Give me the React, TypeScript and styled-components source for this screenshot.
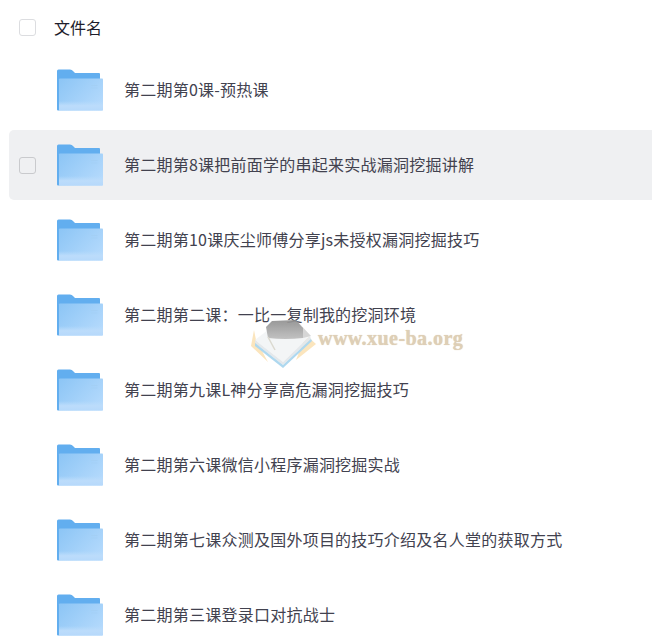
import React from 'react';
import styled, { createGlobalStyle } from 'styled-components';

const files = [
  '第二期第0课-预热课',
  '第二期第8课把前面学的串起来实战漏洞挖掘讲解',
  '第二期第10课庆尘师傅分享js未授权漏洞挖掘技巧',
  '第二期第二课：一比一复制我的挖洞环境',
  '第二期第九课L神分享高危漏洞挖掘技巧',
  '第二期第六课微信小程序漏洞挖掘实战',
  '第二期第七课众测及国外项目的技巧介绍及名人堂的获取方式',
  '第二期第三课登录口对抗战士',
];

const FolderIcon = () => (
  <FolderSvg viewBox="0 0 46 42">
    <defs>
      <linearGradient id="folderFront" x1="0" y1="0" x2="1" y2="0.7">
        <stop offset="0" stopColor="#8cc5f5" />
        <stop offset="1" stopColor="#b3d9fc" />
      </linearGradient>
      <linearGradient id="folderBottom" x1="0" y1="0" x2="0" y2="1">
        <stop offset="0" stopColor="#b9dcfb" stopOpacity="0" />
        <stop offset="0.5" stopColor="#bcdcfb" />
        <stop offset="1" stopColor="#b6d9fb" />
      </linearGradient>
    </defs>
    <path d="M0 2Q0 .5 1.500 .5H13Q15 .5 16 2L18 4H42Q43 4 43 5V12H2.500V41.500H1Q0 41.500 0 40.500Z" fill="#62aeef" />
    <rect x="2" y="9.500" width="44" height="32" rx=".8" fill="url(#folderFront)" />
    <rect x="2" y="32" width="44" height="9.500" rx=".8" fill="url(#folderBottom)" />
    <rect x="34" y="16" width="6.500" height="1" fill="#a3cff5" />
    <rect x="34" y="18.500" width="6.500" height="1" fill="#a3cff5" />
  </FolderSvg>
);

const WatermarkLogo = () => (
  <svg width="68" height="52" viewBox="0 0 68 52">
    <defs>
      <linearGradient id="capBody" x1="0" y1="0" x2="0" y2="1">
        <stop offset="0" stopColor="#8f8f8f" />
        <stop offset="1" stopColor="#bdbdbd" />
      </linearGradient>
    </defs>
    <path d="M4 12 L1 28 L18 44 L6 22 Z" fill="#fbe3b8" />
    <path d="M56 17 L66 26 L46 42 Z" fill="#fbe3b8" />
    <path d="M5 22 L18 12 L60 18 L33 44 Z" fill="#f3f5f6" />
    <path d="M5 22 L33 44 L60 18 L61 21 L33 47 L5 25 Z" fill="#e2e7ea" />
    <path d="M5 25 L33 47 L61 21 L62 23 L33 50 L5 28 Z" fill="#a8d5ee" />
    <path d="M46 2 L61 18 L53 20 L52 8 Z" fill="#d3d3d3" />
    <path d="M16 9 L22 3 L46 2 L53 10 L53 20 Q35 22 18 20 Z" fill="url(#capBody)" />
    <path d="M18 19 L25 32" stroke="#d8d6cc" strokeWidth="1.500" fill="none" />
  </svg>
);

const App: React.FC = () => (
  <Page>
    <GlobalStyle />
    <Header>
      <Checkbox />
      <HeaderLabel>文件名</HeaderLabel>
    </Header>
    <List>
      {files.map((name, index) => (
        <Row key={name} $active={index === 1}>
          <RowCheck>{index === 1 && <Checkbox $active />}</RowCheck>
          <FolderIcon />
          <FileName>{name}</FileName>
        </Row>
      ))}
    </List>
    <Watermark>
      <WatermarkLogo />
      <WatermarkText>www.xue-ba.org</WatermarkText>
    </Watermark>
  </Page>
);

export default App;

const GlobalStyle = createGlobalStyle`
  html, body {
    margin: 0;
    background: #fff;
    overflow: hidden;
  }
`;

const Page = styled.div`
  position: relative;
  width: 652px;
  height: 640px;
  overflow: hidden;
  font-family: "Noto Sans CJK SC", "Liberation Sans", sans-serif;
`;

const Header = styled.div`
  display: flex;
  align-items: center;
  height: 55px;
  padding-left: 19px;
  box-sizing: border-box;
`;

const Checkbox = styled.span<{ $active?: boolean }>`
  display: block;
  flex: none;
  width: 17px;
  height: 17px;
  box-sizing: border-box;
  border: 1px solid ${p => (p.$active ? '#c9cacd' : '#dcdde0')};
  border-radius: 3px;
  background: ${p => (p.$active ? 'transparent' : '#fff')};
`;

const HeaderLabel = styled.span`
  margin: 0 0 2px 18px;
  font-size: 16px;
  color: #1d1d2b;
`;

const List = styled.div`
  display: flex;
  flex-direction: column;
  gap: 5px;
  margin-left: 9px;
`;

const Row = styled.div<{ $active: boolean }>`
  display: flex;
  flex: none;
  align-items: center;
  height: 70px;
  border-radius: 5px 0 0 5px;
  background: ${p => (p.$active ? '#eff0f2' : 'transparent')};
`;

const RowCheck = styled.div`
  flex: none;
  width: 48px;
  padding-left: 10px;
  box-sizing: border-box;
`;

const FolderSvg = styled.svg`
  flex: none;
  width: 46px;
  height: 42px;
`;

const FileName = styled.span`
  margin: 0 0 2px 21px;
  font-size: 16px;
  letter-spacing: 0.24px;
  color: #42424f;
  white-space: nowrap;
`;

const Watermark = styled.div`
  position: absolute;
  left: 250px;
  top: 318px;
  display: flex;
  align-items: center;
  opacity: 0.92;
`;

const WatermarkText = styled.span`
  margin-bottom: 12px;
  font-family: "Liberation Serif", serif;
  font-size: 20px;
  font-weight: bold;
  letter-spacing: 0.45px;
  color: #dccbb0;
  text-shadow: 0 0 1px #dccbb0;
  white-space: nowrap;
`;
